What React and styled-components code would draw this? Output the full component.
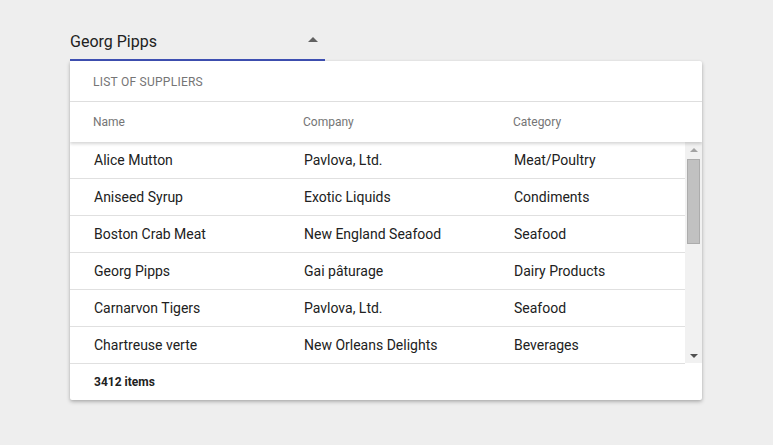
import React from 'react';
import styled, { createGlobalStyle } from 'styled-components';

const GlobalStyle = createGlobalStyle`
  html, body {
    margin: 0;
    padding: 0;
    background: #eeeeee;
    font-family: Roboto, "Liberation Sans", Arial, sans-serif;
  }
`;

const Page = styled.div`
  width: 773px;
  height: 445px;
  padding: 25px 0 0 70px;
  box-sizing: border-box;
`;

const Field = styled.div`
  width: 255px;
  height: 36px;
  display: flex;
  align-items: center;
  justify-content: space-between;
  border-bottom: 2px solid #3f51b5;
  box-sizing: border-box;
  padding-bottom: 2px;
`;

const FieldValue = styled.span`
  font-size: 16px;
  color: #212121;
`;

const Caret = styled.span`
  width: 0;
  height: 0;
  margin-right: 7px;
  margin-bottom: 4px;
  border-left: 5px solid transparent;
  border-right: 5px solid transparent;
  border-bottom: 5px solid #616161;
`;

const Popup = styled.div`
  width: 632px;
  background: #fff;
  border-radius: 0 2px 2px 2px;
  box-shadow: 0 2px 4px rgba(0, 0, 0, 0.2), 0 1px 3px rgba(0, 0, 0, 0.12);
  overflow: hidden;
`;

const Title = styled.div`
  height: 41px;
  display: flex;
  align-items: center;
  padding: 1px 0 0 23px;
  box-sizing: border-box;
  font-size: 12px;
  letter-spacing: 0.25px;
  color: #757575;
  text-transform: uppercase;
  border-bottom: 1px solid #e0e0e0;
`;

const HeadRow = styled.div`
  position: relative;
  z-index: 1;
  height: 40px;
  display: grid;
  grid-template-columns: 210px 210px 1fr;
  align-items: center;
  padding-left: 23px;
  font-size: 12px;
  color: #757575;
  box-shadow: 0 2px 3px rgba(0, 0, 0, 0.16);
`;

const ListArea = styled.div`
  height: 222px;
  display: flex;
`;

const Rows = styled.div`
  flex: 1;
  overflow: hidden;
`;

const Row = styled.div`
  height: 37px;
  display: grid;
  grid-template-columns: 210px 210px 1fr;
  align-items: center;
  padding-left: 24px;
  font-size: 14px;
  color: #212121;
  border-bottom: 1px solid #e0e0e0;
  box-sizing: border-box;
`;

const Scrollbar = styled.div`
  width: 17px;
  height: 221px;
  background: #f1f1f1;
  display: flex;
  flex-direction: column;
  align-items: center;
`;

const ScrollArrow = styled.div`
  height: 15px;
  width: 100%;
  display: flex;
  align-items: center;
  justify-content: center;

  &::after {
    content: '';
    width: 0;
    height: 0;
    border-left: 4px solid transparent;
    border-right: 4px solid transparent;
    ${p => (p.$down
      ? `border-top: 4px solid #505050;`
      : `border-bottom: 4px solid #a3a3a3;`)}
  }
`;

const ScrollTrack = styled.div`
  flex: 1;
  width: 100%;
  display: flex;
  justify-content: center;
  padding-top: 2px;
  box-sizing: border-box;
`;

const Thumb = styled.div`
  width: 13px;
  height: 85px;
  background: #c1c1c1;
  border: 1px solid #acacac;
  box-sizing: border-box;
`;

const Footer = styled.div`
  height: 36px;
  display: flex;
  align-items: center;
  padding-left: 24px;
  font-size: 12px;
  font-weight: 700;
  color: #212121;
`;

const suppliers = [
  ['Alice Mutton', 'Pavlova, Ltd.', 'Meat/Poultry'],
  ['Aniseed Syrup', 'Exotic Liquids', 'Condiments'],
  ['Boston Crab Meat', 'New England Seafood', 'Seafood'],
  ['Georg Pipps', 'Gai pâturage', 'Dairy Products'],
  ['Carnarvon Tigers', 'Pavlova, Ltd.', 'Seafood'],
  ['Chartreuse verte', 'New Orleans Delights', 'Beverages'],
];

export default function App() {
  return (
    <Page>
      <GlobalStyle />
      <Field>
        <FieldValue>Georg Pipps</FieldValue>
        <Caret />
      </Field>
      <Popup>
        <Title>List of suppliers</Title>
        <HeadRow>
          <span>Name</span>
          <span>Company</span>
          <span>Category</span>
        </HeadRow>
        <ListArea>
          <Rows>
            {suppliers.map(([name, company, category]) => (
              <Row key={name}>
                <span>{name}</span>
                <span>{company}</span>
                <span>{category}</span>
              </Row>
            ))}
          </Rows>
          <Scrollbar>
            <ScrollArrow />
            <ScrollTrack>
              <Thumb />
            </ScrollTrack>
            <ScrollArrow $down />
          </Scrollbar>
        </ListArea>
        <Footer>3412 items</Footer>
      </Popup>
    </Page>
  );
}
